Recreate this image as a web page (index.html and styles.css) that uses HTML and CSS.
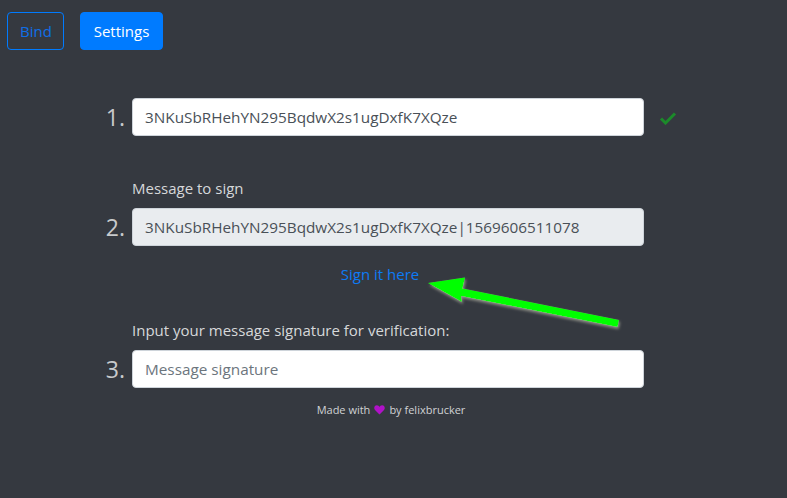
FILE: index.html
```html
<!DOCTYPE html>
<html>
<head>
<meta charset="utf-8">
<link rel="stylesheet" href="styles.css">
</head>
<body>
<div class="page">
  <nav class="topbar">
    <button class="btn btn-outline">Bind</button>
    <button class="btn btn-primary">Settings</button>
  </nav>
  <main class="steps">
    <div class="step step-1">
      <div class="row">
        <span class="num">1.</span>
        <input class="field" type="text" value="3NKuSbRHehYN295BqdwX2s1ugDxfK7XQze">
        <span class="check">
          <svg width="18" height="14" viewBox="0 0 18 14"><path d="M2 7.5 L6.5 12 L16 2.5" fill="none" stroke="#1c8a2a" stroke-width="3"/></svg>
        </span>
      </div>
    </div>
    <div class="step step-2">
      <label class="label">Message to sign</label>
      <div class="row">
        <span class="num">2.</span>
        <input class="field field-readonly" type="text" readonly value="3NKuSbRHehYN295BqdwX2s1ugDxfK7XQze|1569606511078">
        <span class="check"></span>
      </div>
      <div class="link-row"><a class="sign-link" href="#">Sign it here</a></div>
    </div>
    <div class="step step-3">
      <label class="label">Input your message signature for verification:</label>
      <div class="row">
        <span class="num">3.</span>
        <input class="field" type="text" placeholder="Message signature">
        <span class="check"></span>
      </div>
    </div>
    <footer class="footer">Made with <span class="heart"><svg width="11" height="10" viewBox="0 0 11 10"><path d="M5.5 9.6 L1 5 C-0.6 3.2 0.4 0.3 2.9 0.3 C4.2 0.3 5 1.1 5.5 2 C6 1.1 6.8 0.3 8.1 0.3 C10.6 0.3 11.6 3.2 10 5 Z" fill="#b012c8"/></svg></span> by felixbrucker</footer>
  </main>
  <svg class="arrow" width="787" height="498" viewBox="0 0 787 498">
    <defs>
      <filter id="sh" x="-20%" y="-20%" width="140%" height="140%">
        <feGaussianBlur in="SourceAlpha" stdDeviation="1.6"/>
        <feOffset dx="1" dy="1.5" result="b"/>
        <feFlood flood-color="#b8b8a8" flood-opacity="0.7"/>
        <feComposite in2="b" operator="in"/>
        <feMerge><feMergeNode/><feMergeNode in="SourceGraphic"/></feMerge>
      </filter>
    </defs>
    <g filter="url(#sh)" fill="#00ff00">
      <polygon points="428,283 465,277.5 462.5,288.5 619,320 617.5,327 461,296 462,302"/>
    </g>
  </svg>
</div>
</body>
</html>
```
FILE: styles.css
```css
* { box-sizing: border-box; }
html, body { margin: 0; padding: 0; }
body {
  background: #353940;
  font-family: "Open Sans", "Noto Sans", sans-serif;
  color: #d4d6d8;
  width: 787px;
  height: 498px;
  overflow: hidden;
}
.page { position: relative; width: 787px; height: 498px; }
.topbar {
  display: flex;
  gap: 16px;
  padding: 12px 7px 0;
}
.btn {
  height: 38px;
  border-radius: 4px;
  font-family: inherit;
  font-size: 15px;
  padding: 0 12px;
  line-height: 36px;
  border: 1px solid #007bff;
}
.btn-outline { background: transparent; color: #0f6fe8; width: 57px; }
.btn-primary { background: #007bff; color: #fff; width: 83px; }
.steps {
  display: flex;
  flex-direction: column;
  width: 587px;
  margin: 48px 0 0 100px;
}
.row {
  display: flex;
  align-items: center;
}
.num {
  width: 32px;
  padding-right: 7px;
  text-align: right;
  font-size: 23px;
  color: #c8cacc;
  line-height: 38px;
}
.field {
  width: 512px;
  height: 38px;
  border: 1px solid #ced4da;
  border-radius: 4px;
  background: #fff;
  color: #495057;
  font-family: inherit;
  font-size: 15.3px;
  padding: 0 12px;
  outline: none;
}
.field::placeholder { color: #6c757d; }
.field-readonly { background: #e9ecef; }
.check {
  width: 33px;
  display: flex;
  justify-content: flex-end;
  padding-top: 2px;
}
.label {
  display: block;
  margin: 0 0 8px 32px;
  font-size: 15px;
  line-height: 24px;
  color: #d6d8da;
}
.step-2 { margin-top: 40px; }
.link-row {
  display: flex;
  justify-content: center;
  width: 560px;
  margin-top: 16px;
}
.sign-link {
  color: #0d7bf5;
  text-decoration: none;
  font-size: 15px;
  line-height: 24px;
}
.step-3 { margin-top: 32px; }
.footer {
  width: 576px;
  margin: 14px 0 0 3px;
  text-align: center;
  font-size: 11px;
  color: #d0d2d4;
  display: flex;
  justify-content: center;
  align-items: center;
  gap: 4px;
  line-height: 16px;
}
.heart { display: inline-flex; }
.arrow { position: absolute; left: 0; top: 0; pointer-events: none; }
```
